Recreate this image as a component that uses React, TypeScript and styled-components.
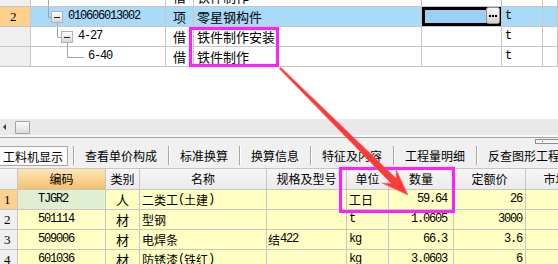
import React from 'react';
import styled, { createGlobalStyle } from 'styled-components';

const CJK = `"Noto Sans CJK SC", "Noto Sans", sans-serif`;
const MONO = `"Liberation Mono", "Noto Sans CJK SC", monospace`;
const LINE = '#c6c6c6';

const GlobalStyle = createGlobalStyle`
  html, body { margin: 0; padding: 0; background: #fff; }
  body { font-family: ${CJK}; color: #000; }
  * { box-sizing: border-box; }
`;

const Page = styled.div`
  position: relative;
  width: 558px;
  height: 264px;
  overflow: hidden;
  background: #fff;
  display: flex;
  flex-direction: column;
`;

/* ---------- upper tree grid ---------- */

const TopGrid = styled.div`
  flex: none;
  margin-top: -13px;
  display: grid;
  grid-template-columns: 31px 135px 28px 228px 80px 41px 1fr;
  grid-auto-rows: 20px;
  font-size: 13px;
`;

type CellProps = {
  $bg?: string;
  $align?: 'left' | 'center' | 'right';
  $padL?: number;
  $padR?: number;
};

const Cell = styled.div<CellProps>`
  position: relative;
  display: flex;
  align-items: center;
  justify-content: ${(p) =>
    p.$align === 'center' ? 'center' : p.$align === 'right' ? 'flex-end' : 'flex-start'};
  padding-left: ${(p) => p.$padL ?? 2}px;
  padding-right: ${(p) => p.$padR ?? 0}px;
  border-right: 1px solid ${LINE};
  border-bottom: 1px solid ${LINE};
  background: ${(p) => p.$bg ?? '#fff'};
  white-space: nowrap;
  overflow: hidden;
  line-height: 19px;
`;

const KindCell = styled(Cell)`
  font-size: 13px;
`;

const RowNum = styled(Cell)`
  font-family: "Liberation Serif", serif;
  font-size: 13px;
`;

const Mono = styled.span`
  font-family: ${MONO};
  font-size: 12px;
  letter-spacing: -1.2px;
`;

const Editor = styled(Cell)`
  box-shadow: inset 0 0 0 3px #000;
  overflow: visible;
`;

const DotsButton = styled.svg`
  position: absolute;
  top: 0;
  right: 1px;
  display: block;
`;

const TreeSvg = styled.svg`
  flex: none;
  display: block;
  margin-left: -2px;
`;

type TreeKind = 'above' | 'root' | 'mid' | 'leaf';
const treeWidth: Record<TreeKind, number> = { above: 59, root: 39, mid: 49, leaf: 59 };

function MinusBox({ x, id }: { x: number; id: string }) {
  return (
    <g>
      <defs>
        <linearGradient id={id} x1="0" y1="0" x2="0" y2="1">
          <stop offset="0" stopColor="#ffffff" />
          <stop offset="1" stopColor="#d4d4d4" />
        </linearGradient>
      </defs>
      <rect x={x + 0.5} y={4.5} width={11} height={11} fill={`url(#${id})`} stroke="#b2b2b2" />
      <line x1={x + 3} y1={10.5} x2={x + 9} y2={10.5} stroke="#222" />
    </g>
  );
}

function TreeMark({ kind }: { kind: TreeKind }) {
  const c = '#a4a4a4';
  return (
    <TreeSvg width={treeWidth[kind]} height={19}>
      {kind === 'above' && <line x1={19.5} y1={0} x2={19.5} y2={19} stroke={c} />}
      {kind === 'root' && (
        <>
          <path d="M19.5 0 V10.5 H22" fill="none" stroke={c} />
          <line x1={28.5} y1={16} x2={28.5} y2={19} stroke={c} />
          <MinusBox x={22} id="mbRoot" />
        </>
      )}
      {kind === 'mid' && (
        <>
          <path d="M28.5 0 V10.5 H32" fill="none" stroke={c} />
          <line x1={38.5} y1={16} x2={38.5} y2={19} stroke={c} />
          <MinusBox x={32} id="mbMid" />
        </>
      )}
      {kind === 'leaf' && <path d="M38.5 0 V10.5 H55" fill="none" stroke={c} />}
    </TreeSvg>
  );
}

type TopRow = {
  num: string;
  code: string;
  tree: TreeKind;
  type: string;
  name: string;
  unit: string;
  selected?: boolean;
};

const topRows: TopRow[] = [
  { num: '', code: '6-27', tree: 'above', type: '借', name: '铁件制作', unit: 't' },
  { num: '2', code: '010606013002', tree: 'root', type: '项', name: '零星钢构件', unit: 't', selected: true },
  { num: '', code: '4-27', tree: 'mid', type: '借', name: '铁件制作安装', unit: 't' },
  { num: '', code: '6-40', tree: 'leaf', type: '借', name: '铁件制作', unit: 't' },
];

const SEL_BLUE = '#a9dbf8';
const ORANGE = '#fdd08c';
const GRAYCELL = '#efefef';

/* ---------- scroll bar + tabs ---------- */

const Blank = styled.div`
  flex: 0 0 52px;
`;

const HScroll = styled.div`
  flex: 0 0 16px;
  background: #e9e9e9;
  display: flex;
  align-items: center;
  padding-left: 3px;
`;

const ScrollArrow = styled.span`
  width: 0;
  height: 0;
  border-top: 3px solid transparent;
  border-bottom: 3px solid transparent;
  border-right: 3px solid #3a3a3a;
`;

const Thumb = styled.span`
  margin-left: 9px;
  width: 15px;
  height: 13px;
  border: 1px solid #a3a3a3;
  border-radius: 1px;
  background: linear-gradient(#fbfbfb, #dcdcdc);
`;

const Divider = styled.div`
  flex: 0 0 3px;
  background: #f7f7f7;
  border-bottom: 1px solid #a2a2a2;
`;

const TabBar = styled.div`
  position: relative;
  flex: 0 0 30px;
  background: #f0f0f0;
  display: flex;
  align-items: flex-end;
  padding-bottom: 2px;
  font-size: 12px;
`;

const Tab = styled.div<{ $active?: boolean }>`
  height: 20px;
  line-height: 19px;
  white-space: nowrap;
  padding: ${(p) => (p.$active ? '0 4px 0 3px' : '0 11px 0 10px')};
  margin-left: ${(p) => (p.$active ? '-1px' : '0')};
  margin-right: ${(p) => (p.$active ? '5px' : '0')};
  border: ${(p) => (p.$active ? '1px solid #a8a8a8' : 'none')};
  background: ${(p) => (p.$active ? '#fbfbfb' : 'transparent')};
`;

const TabSep = styled.span`
  flex: none;
  width: 2px;
  height: 19px;
  margin-bottom: 1px;
  border-left: 1px solid #a6a6a6;
  border-right: 1px solid #ffffff;
`;

const MiniSlider = styled.div`
  position: absolute;
  right: -4px;
  top: 1px;
  width: 27px;
  height: 5px;
  border: 1px solid #8c8c8c;
  background: #f4f4f4;
  &::after {
    content: '';
    position: absolute;
    left: 6px;
    top: 1px;
    width: 1px;
    height: 1px;
    background: #1a3cff;
  }
`;

const tabs = ['查看单价构成', '标准换算', '换算信息', '特征及内容', '工程量明细', '反查图形工程量'];

/* ---------- lower resource grid ---------- */

const BottomGrid = styled.div`
  flex: none;
  display: grid;
  grid-template-columns: 18px 88px 34px 127px 80px 42px 65px 72px 72px;
  grid-template-rows: 21px;
  grid-auto-rows: 20px;
  border-top: 1px solid ${LINE};
  font-size: 12px;
`;

const Head = styled(Cell)<{ $hot?: boolean }>`
  justify-content: center;
  padding-left: 0;
  background: ${(p) =>
    p.$hot ? 'linear-gradient(#fce6b8, #f4c06e)' : 'linear-gradient(#f6f6f6, #ebebeb)'};
  line-height: 20px;
`;

const YELLOW = '#ffffc4';
const GREEN = '#e0efd1';

type ResRow = {
  num: string;
  code: string;
  type: string;
  name: string;
  spec: string;
  unit: string;
  qty: string;
  price: string;
};

const resRows: ResRow[] = [
  { num: '1', code: 'TJGR2', type: '人', name: '二类工(土建)', spec: '', unit: '工日', qty: '59.64', price: '26' },
  { num: '2', code: '501114', type: '材', name: '型钢', spec: '', unit: 't', qty: '1.0605', price: '3000' },
  { num: '3', code: '509006', type: '材', name: '电焊条', spec: '结422', unit: 'kg', qty: '66.3', price: '3.6' },
  { num: '4', code: '601036', type: '材', name: '防锈漆(铁红)', spec: '', unit: 'kg', qty: '3.0603', price: '6' },
];

// ascii runs go in the narrow mono face, the rest stays CJK
function Mixed({ text }: { text: string }) {
  const parts = text.split(/([\x00-\x7f]+)/).filter(Boolean);
  return (
    <>
      {parts.map((p, i) => (/^[\x00-\x7f]+$/.test(p) ? <Mono key={i}>{p}</Mono> : <span key={i}>{p}</span>))}
    </>
  );
}

/* ---------- annotations ---------- */

const Highlight = styled.div<{ $x: number; $y: number; $w: number; $h: number }>`
  position: absolute;
  left: ${(p) => p.$x}px;
  top: ${(p) => p.$y}px;
  width: ${(p) => p.$w}px;
  height: ${(p) => p.$h}px;
  border: 3px solid #ff1fff;
  pointer-events: none;
`;

const ArrowLayer = styled.svg`
  position: absolute;
  left: 0;
  top: 0;
  pointer-events: none;
`;

function RedArrow() {
  const tail = [280, 68];
  const tip = [408, 195];
  const dx = tip[0] - tail[0];
  const dy = tip[1] - tail[1];
  const len = Math.hypot(dx, dy);
  const ux = dx / len;
  const uy = dy / len;
  const nx = -uy;
  const ny = ux;
  const at = (back: number, side: number) =>
    `${(tip[0] - ux * back + nx * side).toFixed(1)},${(tip[1] - uy * back + ny * side).toFixed(1)}`;
  const pts = [
    at(len, 1),
    at(20, 3.6),
    at(27, 10),
    at(0, 0),
    at(27, -10),
    at(20, -3.6),
    at(len, -1),
  ].join(' ');
  return (
    <ArrowLayer width={558} height={264}>
      <polygon points={pts} fill="#fa3b3b" stroke="#ff6a6a" strokeWidth={0.6} />
    </ArrowLayer>
  );
}

export default function App() {
  return (
    <>
      <GlobalStyle />
      <Page>
        <TopGrid>
          {topRows.map((r, i) => {
            const bg = r.selected ? SEL_BLUE : '#fff';
            return (
              <React.Fragment key={i}>
                <RowNum $bg={r.selected ? ORANGE : GRAYCELL} $padL={10}>
                  {r.num}
                </RowNum>
                <Cell $bg={bg} $padL={0}>
                  <TreeMark kind={r.tree} />
                  <Mono>{r.code}</Mono>
                </Cell>
                <Cell $bg={bg} $align="center" $padL={0}>
                  {r.type}
                </Cell>
                <Cell $bg={bg} $padL={3}>
                  {r.name}
                </Cell>
                {r.selected ? (
                  <Editor $bg="#9ad0f6">
                    <DotsButton width={14} height={17}>
                      <defs>
                        <linearGradient id="btnG" x1="0" y1="0" x2="0" y2="1">
                          <stop offset="0" stopColor="#fbfbfb" />
                          <stop offset="1" stopColor="#cfcfcf" />
                        </linearGradient>
                      </defs>
                      <rect x={0.5} y={0.5} width={13} height={16} rx={2} fill="url(#btnG)" stroke="#8e8e8e" />
                      <rect x={3} y={8} width={2} height={2} fill="#000" />
                      <rect x={6} y={8} width={2} height={2} fill="#000" />
                      <rect x={9} y={8} width={2} height={2} fill="#000" />
                    </DotsButton>
                  </Editor>
                ) : (
                  <Cell $bg={bg} />
                )}
                <Cell $bg={bg} $padL={3}>
                  <Mono>{r.unit}</Mono>
                </Cell>
                <Cell $bg={bg} />
              </React.Fragment>
            );
          })}
        </TopGrid>

        <Blank />

        <HScroll>
          <ScrollArrow />
          <Thumb />
        </HScroll>
        <Divider />

        <TabBar>
          <Tab $active>工料机显示</Tab>
          {tabs.map((t) => (
            <React.Fragment key={t}>
              <TabSep />
              <Tab>{t}</Tab>
            </React.Fragment>
          ))}
          <MiniSlider />
        </TabBar>

        <BottomGrid>
          <Head />
          <Head $hot>编码</Head>
          <Head>类别</Head>
          <Head>名称</Head>
          <Head>规格及型号</Head>
          <Head>单位</Head>
          <Head>数量</Head>
          <Head>定额价</Head>
          <Head>市场价</Head>
          {resRows.map((r, i) => (
            <React.Fragment key={r.code}>
              <RowNum $bg={i === 0 ? ORANGE : GRAYCELL} $padL={4}>
                {r.num}
              </RowNum>
              <Cell $bg={i === 0 ? GREEN : YELLOW} $padL={20}>
                <Mono>{r.code}</Mono>
              </Cell>
              <KindCell $bg={YELLOW} $align="center" $padL={0}>
                {r.type}
              </KindCell>
              <Cell $bg={YELLOW} $padL={2}>
                <Mixed text={r.name} />
              </Cell>
              <Cell $bg={YELLOW} $padL={1}>
                <Mixed text={r.spec} />
              </Cell>
              <Cell $bg={YELLOW} $padL={2}>
                <Mixed text={r.unit} />
              </Cell>
              <Cell $bg={YELLOW} $align="right" $padR={6}>
                <Mono>{r.qty}</Mono>
              </Cell>
              <Cell $bg={YELLOW} $align="right" $padR={3}>
                <Mono>{r.price}</Mono>
              </Cell>
              <Cell $bg={YELLOW} />
            </React.Fragment>
          ))}
        </BottomGrid>

        <Highlight $x={189} $y={27} $w={90} $h={40} />
        <Highlight $x={339} $y={167} $w={116} $h={46} />
        <RedArrow />
      </Page>
    </>
  );
}
